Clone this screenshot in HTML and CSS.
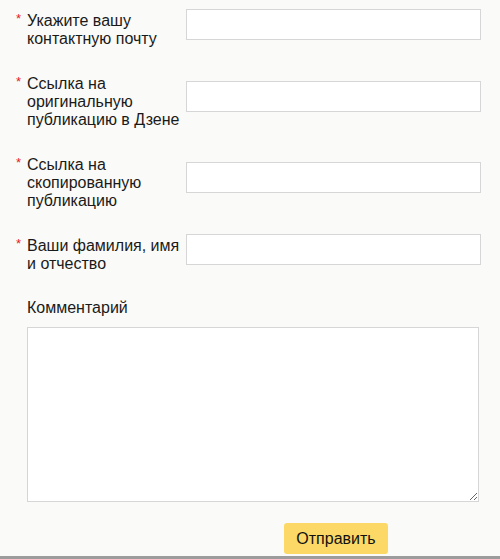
FILE: index.html
```html
<!DOCTYPE html>
<html lang="ru">
<head>
    <meta charset="UTF-8">
    <meta name="viewport" content="width=device-width, initial-scale=1.0">
    <title>Форма обращения</title>
    <link rel="stylesheet" href="styles.css">
</head>
<body>
    <form class="claim-form">
        <div class="row">
            <label class="label required" for="email">Укажите вашу контактную почту</label>
            <input class="field" type="text" id="email">
        </div>
        <div class="row">
            <label class="label required" for="original">Ссылка на оригинальную публикацию в Дзене</label>
            <input class="field" type="text" id="original">
        </div>
        <div class="row">
            <label class="label required" for="copy">Ссылка на скопированную публикацию</label>
            <input class="field" type="text" id="copy">
        </div>
        <div class="row">
            <label class="label required" for="fio">Ваши фамилия, имя и отчество</label>
            <input class="field" type="text" id="fio">
        </div>

        <label class="comment-label" for="comment">Комментарий</label>
        <textarea class="comment" id="comment"></textarea>

        <button class="submit" type="submit">Отправить</button>
    </form>
    <div class="bottom-line"></div>
</body>
</html>
```

FILE: styles.css
```css
body {
    margin: 0;
    padding: 0;
    background-color: #fafaf8;
    font-family: "Liberation Sans", Arial, sans-serif;
    font-size: 16px;
    line-height: 18px;
    color: #1a1a1a;
}
.claim-form {
    padding: 12px 0 0 27px;
}
.row {
    display: flex;
    align-items: center;
    margin-bottom: 27px;
}
.label {
    position: relative;
    width: 159px;
}
/* звёздочка обязательного поля */
.required::before {
    content: "*";
    position: absolute;
    left: -11px;
    top: -2px;
    color: #e52020;
    font-size: 13px;
}
.field {
    box-sizing: border-box;
    width: 295px;
    height: 31px;
    margin: -11px 0 0 0;
    padding: 0 6px;
    background: #fff;
    border: 1px solid #d6d6d6;
    border-radius: 0;
    font: inherit;
}
.comment-label {
    display: block;
    margin-top: -1px;
}
.comment {
    display: block;
    box-sizing: border-box;
    width: 452px;
    height: 175px;
    margin: 10px 0 0 0;
    background: #fff;
    border: 1px solid #d6d6d6;
    font: inherit;
}
.submit {
    display: block;
    width: 104px;
    height: 31px;
    margin: 21px 0 0 257px;
    background: #fcd966;
    border: none;
    border-radius: 3px;
    font: inherit;
    color: #111;
}
.bottom-line {
    margin-top: 2px;
    border-top: 3px solid #9c9c9c;
}
```
